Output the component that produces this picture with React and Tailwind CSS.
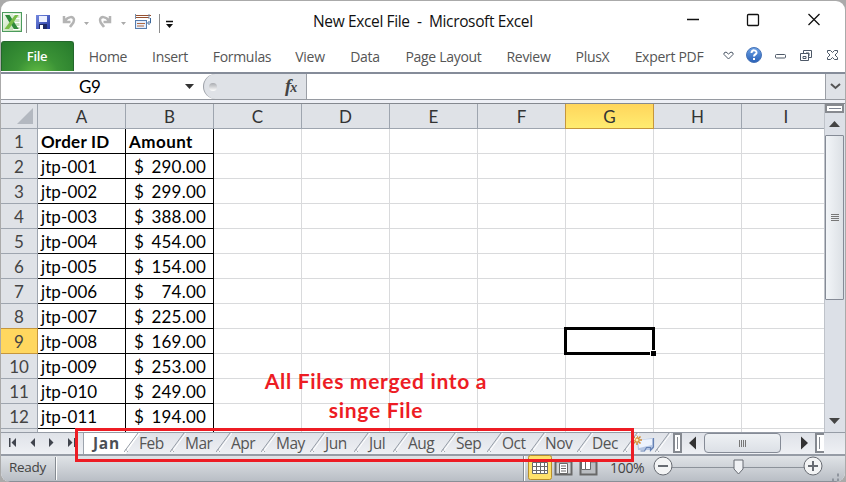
import React from "react";

const ribbonTabs = [
  ["Home", "w-[62px]"], ["Insert", "w-[62px]"], ["Formulas", "w-[82px]"], ["View", "w-[54px]"], ["Data", "w-[56px]"],
  ["Page Layout", "w-[101px]"], ["Review", "w-[69px]"], ["PlusX", "w-[59px]"], ["Expert PDF", "w-[94px]"],
];
const columns = ["A", "B", "C", "D", "E", "F", "G", "H"];
const amounts = ["290.00", "299.00", "388.00", "454.00", "154.00", "74.00", "225.00", "169.00", "253.00", "249.00", "194.00"];
const rows = Array.from({ length: 12 }, (_, i) => i + 1);
const sheets = [
  ["Feb", "w-[46px]"], ["Mar", "w-[46px]"], ["Apr", "w-[45px]"], ["May", "w-[49px]"], ["Jun", "w-[44px]"], ["Jul", "w-[39px]"],
  ["Aug", "w-[48px]"], ["Sep", "w-[46px]"], ["Oct", "w-[43px]"], ["Nov", "w-[47px]"], ["Dec", "w-[46px]"],
];

function TitleBar() {
  return (
    <header className="flex h-[40px] shrink-0 items-start">
      <svg width="190" height="40" className="shrink-0">
        <defs>
          <linearGradient id="xl" x1="0" y1="0" x2="1" y2="1"><stop stopColor="#f4faf1" /><stop offset="1" stopColor="#b5d8a8" /></linearGradient>
          <linearGradient id="disk" x2="1" y2="1"><stop stopColor="#7589df" /><stop offset="1" stopColor="#2338a4" /></linearGradient>
        </defs>
        <rect x="1.500" y="11.500" width="19" height="19" fill="url(#xl)" stroke="#4b9b5d" />
        <path d="M12 13.500h7v15h-7M13 17.500h6M14 21.500h5M13 25.500h6" fill="none" stroke="#fff" />
        <path d="M4 14h4.500l2.600 4 1.500 2.500 5 7.500H13l-3-4.500-2.500-3.500z" fill="#2f8a3b" />
        <path d="M14 14h3.500L8 28H3.500z" fill="#79bd48" />
        <path d="M25.500 13v19M158.500 13v19" stroke="#8d8d8d" />
        <rect x="35" y="14" width="14" height="14" fill="url(#disk)" />
        <path d="M38 15h8v6h-8z" fill="#edf1ff" /><path d="M38 23h8v5h-8z" fill="#1d2964" /><path d="M39 24h3v4h-3z" fill="#fff" />
        <g fill="none" stroke="#b4b4b4" strokeWidth="2.500">
          <path d="M63 15v6h6.500M64 20c3-5 9-5 9-1 0 3-2 4-4 7" />
          <path d="M109 15v6h-6.500M108 20c-3-5-9-5-9-1 0 3 2 4 4 7" />
        </g>
        <path d="M83 21h5l-2.500 3zM120 21h5l-2.500 3z" fill="#aaa" />
        <path d="M134 14.500h16M134 16.500h14" stroke="#965131" /><path d="M134.500 13v5M148 13v5" stroke="#7890ad" />
        <rect x="134.500" y="19.500" width="11" height="8" fill="#e5eefc" stroke="#557bad" />
        <path d="M136 22.500h8M136 25h7" stroke="#ae6943" /><path d="M149.500 17v5h-2m1-2-2 2 2 2" fill="none" stroke="#3c6799" />
        <path d="M165 20.500h7" stroke="#111" strokeWidth="1.500" /><path d="M165 23h7l-3.500 4z" fill="#111" />
      </svg>
      <h1 className="mt-[9px] ml-[122px] w-[222px] whitespace-pre text-[15.500px] leading-[22px] tracking-[-0.36px] text-[#111]">New Excel File  -  Microsoft Excel</h1>
      <svg width="150" height="32" className="ml-[147px] shrink-0 fill-none stroke-[#111] stroke-[1.3]">
        <path d="M5 18.500h12M126.500 13l11 11m0-11-11 11" /><rect x="65.500" y="13.500" width="11" height="11" rx="1" />
      </svg>
    </header>
  );
}

function Ribbon() {
  return (
    <nav className="flex h-[31px] shrink-0 text-[14px] tracking-[-0.3px] text-[#555]">
      <div className="mr-[3px] flex h-[30px] w-[73px] shrink-0 items-center justify-center rounded-t-[3px] border border-b-0 border-[#24672c] bg-[radial-gradient(ellipse_at_50%_115%,#63be45_0%,#3b9336_42%,#267a2c_100%)] pr-[1px] text-[13px] font-semibold text-white">File</div>
      {ribbonTabs.map(([name, width]) => <div key={name} className={`${width} flex shrink-0 items-center justify-center whitespace-nowrap`}>{name}</div>)}
      <svg width="130" height="30" className="-ml-[8px] shrink-0 fill-none stroke-[#4d5867]">
        <defs><linearGradient id="help" x2="0" y2="1"><stop stopColor="#6da2e6" /><stop offset="1" stopColor="#2860b7" /></linearGradient></defs>
        <path d="m16 12 2-1 2.500 2 2.500-2 2 1v1.500l-4.500 4.500-4.500-4.500z" />
        <circle cx="46" cy="14" r="7.500" fill="url(#help)" stroke="#4874b8" />
        <path d="M43.500 12c0-4 5.500-3 5 0-.3 1.500-2.500 1.500-2.500 3.500m0 1.500v2" stroke="#fff" strokeWidth="2" />
        <rect x="67.500" y="13.500" width="10" height="3.500" rx="1" />
        <path d="M95.500 12.500v-3h8v7h-3M92.500 12.500h8v7h-8zM95 15.500h3v2h-3zM98 12h3v3" />
        <path d="m119.500 9.500h3l2 2 2-2h3v2l-2.500 2.500 2.500 2.500v2h-3l-2-2-2 2h-3v-2l2.500-2.500-2.500-2.500z" />
      </svg>
    </nav>
  );
}

function FormulaBar() {
  return (
    <div className="flex h-[28px] shrink-0 border-t-2 border-b border-t-[#858c99] border-b-[#969aa1] bg-white">
      <div className="flex w-[202px] items-center font-['Lato',sans-serif] text-[17px] leading-6">
        <span className="ml-[78px] w-[23px] tracking-[-0.3px]">G9</span>
        <svg width="10" height="6" className="ml-[83px]"><path d="M0 0h9L4.500 5z" fill="#333" /></svg>
      </div>
      <div className="flex w-[104px] items-center rounded-l-full border-r border-l border-[#9b9fa6] bg-[#dfe2e7]">
        <div className="ml-[5px] size-[8px] rounded-full bg-linear-to-b from-[#a9abb0] to-white" />
        <span className="ml-[68px] font-['Liberation_Serif',serif] text-[19px] leading-5 font-bold italic text-[#444]">f<span className="-ml-px text-[14px]">x</span></span>
      </div>
      <div className="flex-1" />
      <div className="flex w-[20px] items-center justify-center border-l border-[#9b9fa6] bg-[#dfe2e7]">
        <svg width="11" height="7"><path d="M1 1l4.500 4L10 1" fill="none" stroke="#555" strokeWidth="2" /></svg>
      </div>
    </div>
  );
}

function Grid() {
  return (
    <div className="h-[328px] w-[823px] overflow-hidden bg-white font-['Lato',sans-serif] text-[17px]">
      <div className="flex h-[25px] text-[17px] leading-[26px] text-[#333]">
        <div className="flex w-[37px] shrink-0 items-end justify-end border-r border-b border-[#9ea5af] bg-[#dfe2e7] p-[4px]">
          <svg width="16" height="16"><path d="M16 0v16H0z" fill="#b3b8c0" /></svg>
        </div>
        {columns.map((column) => <div key={column} className={`w-[88px] shrink-0 border-r border-b text-center ${column === "G" ? "border-[#c5963d] bg-linear-to-b from-[#ffd55c] to-[#ffec70] shadow-[-1px_0_#c5963d]" : "border-[#9ea5af] bg-[#dfe2e7]"}`}>{column}</div>)}
        <div className="w-[88px] shrink-0 border-b border-[#9ea5af] bg-[#dfe2e7] text-center">I</div>
      </div>
      {rows.map((row) => (
        <div key={row} className="flex h-[25px] leading-[26px]">
          <div className={`w-[37px] shrink-0 border-r border-b text-center text-[#444] ${row === 9 ? "border-[#c5963d] bg-[#ffd75f] shadow-[0_-1px_#c5963d]" : "border-[#9ea5af] bg-[#dfe2e7]"}`}>{row}</div>
          <div className="w-[88px] shrink-0 border-r border-b border-black pl-[3px] text-black">
            {row === 1 ? <b className="tracking-[0.25px]">Order ID</b> : <span className="tracking-[0.1px]">{`jtp-${String(row - 1).padStart(3, "0")}`}</span>}
          </div>
          <div className="flex w-[88px] shrink-0 justify-between border-r border-b border-black pr-[7px] pl-[3px] text-black">
            {row === 1 ? <b className="tracking-[0.45px]">Amount</b> : <><span className="ml-[5px]">$</span><span className="tracking-[0.2px]">{amounts[row - 2]}</span></>}
          </div>
          {columns.slice(2).map((column) => (
            <div key={column} className="relative w-[88px] shrink-0 border-r border-b border-[#d9dadc]">
              {row === 9 && column === "G" && <>
                <div className="absolute -top-[2px] -left-[2px] z-10 h-[28px] w-[91px] border-[3px] border-black" />
                <div className="absolute top-[21px] left-[84px] z-10 size-[6px] border-t border-l border-white bg-black" />
              </>}
            </div>
          ))}
          <div className="w-[88px] shrink-0 border-b border-[#d9dadc]" />
        </div>
      ))}
      <div className="flex h-[3px]">
        <div className="w-[37px] shrink-0 border-r border-[#9ea5af] bg-[#dfe2e7]" />
        <div className="w-[88px] shrink-0 border-r border-black" /><div className="w-[88px] shrink-0 border-r border-black" />
        {columns.slice(2).map((column) => <div key={column} className="w-[88px] shrink-0 border-r border-[#d9dadc]" />)}
      </div>
    </div>
  );
}

function VerticalScroll() {
  return (
    <aside className="flex w-[21px] shrink-0 flex-col border-l border-[#bfc3ca] bg-[#dce0e7]">
      <div className="flex h-[9px] w-[19px] items-center justify-center border-2 border-[#878a90] bg-white"><div className="h-px w-[12px] bg-[#7e8492]" /></div>
      <div className="flex h-[22px] w-[19px] items-center justify-center"><svg width="11" height="6"><path d="M0 6h11L5.500 0z" fill="#444" /></svg></div>
      <div className="flex h-[165px] w-[19px] items-center justify-center rounded-[1px] border border-[#858b96] bg-linear-to-r from-[#f2f5f8] to-[#dce0e5]">
        <div className="flex h-[7px] w-[8px] flex-col justify-between"><i className="h-px bg-[#777]" /><i className="h-px bg-[#777]" /><i className="h-px bg-[#777]" /><i className="h-px bg-[#777]" /></div>
      </div>
      <svg width="11" height="6" className="mt-auto mb-[8px] ml-[4px]"><path d="M0 0h11L5.500 6z" fill="#444" /></svg>
    </aside>
  );
}

function Slant() {
  return <svg width="16" height="20" className="absolute top-0 right-[-14px] z-10"><path d="M0 19 14 0M4 19c-1-1-2-2-2-3" stroke="#959ca6" fill="none" /><path d="M2 19 16 0" stroke="#fff" /></svg>;
}

function SheetTabs() {
  return (
    <div className="flex h-[24px] shrink-0 border-t border-b-2 border-[#969ca6] bg-linear-to-b from-[#dfe2e8] to-[#eef0f4] text-[15.500px] leading-[21px] text-[#555]">
      <svg width="82" height="20" className="shrink-0 fill-[#40444d]">
        <path d="M8 5h1.500v9H8zm7 0v9l-4.500-4.500zM34 5v9l-4.500-4.500zM48 5v9l4.500-4.500zM67 5v9l4.500-4.500zM73 5h1.500v9H73z" />
      </svg>
      <div className="relative w-[43px] border-l border-[#9ca3ad] bg-white pl-[9px] font-bold tracking-[0.7px] text-[#4b4f55]">
        Jan
        <svg width="14" height="20" className="absolute top-0 left-[42px]"><path d="M0 20 14 0H0z" fill="#fff" /></svg><Slant />
      </div>
      {sheets.map(([name, width]) => <div key={name} className={`${width} relative shrink-0 pl-[13px] tracking-[-0.5px]`}>{name}<Slant /></div>)}
      <div className="relative w-[32px] shrink-0"><svg width="32" height="21">
        <path d="m12 7 17-2v9c0 2-2 3-4 3H13z" fill="#b5c6e3" /><path d="m13 7 14-1v6l-13 3z" fill="#edf3fd" /><path d="M28.500 5v9l-3 3.500v-3h-4l-2 3.500h-4" fill="none" stroke="#6581b3" strokeWidth="1.200" />
        <path d="M12 2v10M7 7h10M8.500 3.500l7 7m0-7-7 7" stroke="#d38a31" strokeWidth="1.500" /><circle cx="12" cy="7" r="1.500" fill="#fff2bc" />
      </svg><Slant /></div>
      <div className="ml-[16px] h-[20px] w-[9px] shrink-0 border-2 border-[#858990] bg-white p-[2px]"><div className="h-full border-l border-[#858990]" /></div>
      <svg width="22" height="20" className="shrink-0"><path d="M14 3.500v13L7 10z" fill="#333" /></svg>
      <div className="flex h-[20px] w-[77px] shrink-0 items-center justify-center rounded-sm border border-[#858b96] bg-linear-to-b from-[#eef1f4] to-[#dce0e6]">
        <div className="flex h-[7px] w-[8px] justify-between"><i className="w-px bg-[#777]" /><i className="w-px bg-[#777]" /><i className="w-px bg-[#777]" /><i className="w-px bg-[#777]" /></div>
      </div>
      <svg width="34" height="20" className="shrink-0"><path d="M20 3.500v13l7-6.500z" fill="#333" /></svg>
      <div className="h-[20px] w-[9px] shrink-0 border-2 border-r-0 border-[#858990] bg-white p-[2px]"><div className="h-full border-l border-[#858990]" /></div>
    </div>
  );
}

function StatusBar() {
  return (
    <footer className="flex h-[26px] shrink-0 border-b border-[#8a8f97] bg-linear-to-b from-[#e0e3e7] to-[#b9bec5] text-[13.500px] leading-[23px] text-[#444]">
      <span className="ml-[8px] w-[46px] tracking-[-0.3px]">Ready</span>
      <i className="mt-[1px] h-[23px] border-r border-l border-r-white border-l-[#858b92]" />
      <i className="ml-[466px] h-[25px] border-r border-l border-r-white border-l-[#858b92]" />
      <svg width="82" height="26" className="shrink-0 overflow-visible">
        <rect x="3.500" y="-.500" width="23" height="24" rx="2" fill="#ffe16a" stroke="#b88f2b" />
        <g fill="#fff" stroke="#686868"><path d="M7.500 6.500h15v11h-15zM7.500 10.500h15M7.500 14.500h15M11.500 6.500v11M15.500 6.500v11M19.500 6.500v11" /><path d="M30.500 5.500h16v13h-16z" fill="#d5d7d9" strokeWidth="2" /><path d="M34.500 7.500h8v10h-8zM36 10h5M36 12.500h5M36 15h5" /><path d="M55.500 5.500h16v13h-16z" fill="#bbbec2" strokeWidth="2" /><path d="M56.500 5.500h4v8h-4zM60.500 5.500h5v8h-5z" /></g>
      </svg>
      <span className="ml-[3px] w-[40px] text-[14px] tracking-[-0.3px]">100%</span>
      <svg width="190" height="25" className="shrink-0 fill-none stroke-[#676b72]">
        <path d="M20 11.500h136" stroke="#8c929a" /><circle cx="13" cy="10" r="9" fill="#f3f4f5" /><circle cx="163" cy="10" r="9" fill="#f3f4f5" /><path d="M8 10h10M158 10h10M163 5v10" strokeWidth="2" /><path d="M84 4h9v9l-4.500 5-4.500-5z" fill="#f0f2f5" />
        <path d="M182 24h2M187 24h2M187 19h2" stroke="#8f959e" strokeWidth="3" />
      </svg>
    </footer>
  );
}

export default function App() {
  return (
    <main className="relative flex h-[482px] w-[846px] bg-[#aaa] pt-px pl-px font-['Open_Sans','Noto_Sans',sans-serif]">
      <div className="flex w-[844px] flex-col overflow-hidden rounded-[9px] bg-white">
        <TitleBar /><Ribbon /><FormulaBar />
        <div className="h-[4px] shrink-0 border-b border-[#858990] bg-[#eef0f6]" />
        <div className="flex h-[328px] shrink-0"><Grid /><VerticalScroll /></div>
        <SheetTabs />
        <StatusBar />
      </div>
      <div className="absolute top-[366px] left-[246px] z-20 w-[260px] text-center font-['Lato',sans-serif] text-[21px] leading-[29px] font-bold tracking-[0.7px] text-[#ed1c24]">All Files merged into a<br />singe File</div>
      <div className="absolute top-[428px] left-[75px] z-20 h-[34px] w-[559px] border-[3px] border-[#ed1c24]" />
    </main>
  );
}
